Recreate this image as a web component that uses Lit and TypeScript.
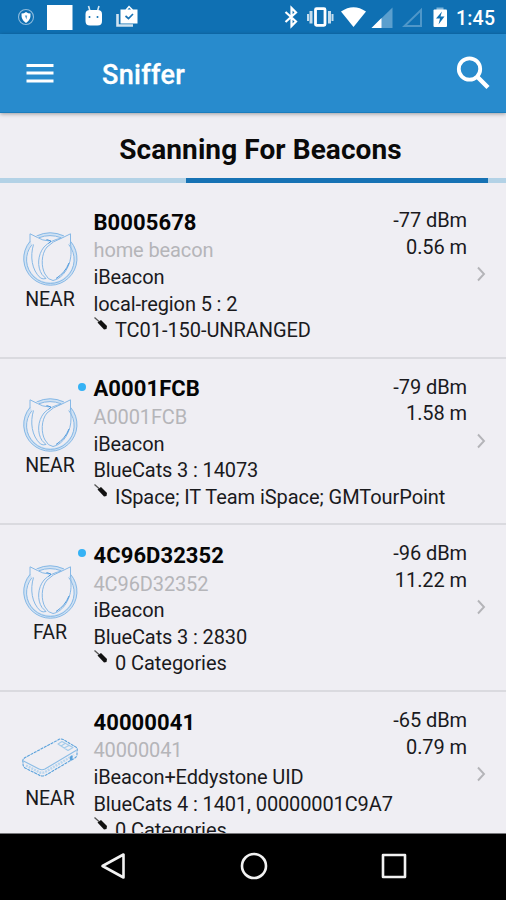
import { LitElement, html, svg, css, nothing } from "lit";
import { customElement, property } from "lit/decorators.js";

interface Beacon {
  name: string;
  alias: string;
  type: string;
  region: string;
  tags: string;
  rssi: string;
  distance: string;
  range: string;
  fresh: boolean;
  device: "tag" | "phone";
}

const beacons: Beacon[] = [
  { name: "B0005678", alias: "home beacon", type: "iBeacon", region: "local-region 5 : 2", tags: "TC01-150-UNRANGED", rssi: "-77 dBm", distance: "0.56 m", range: "NEAR", fresh: false, device: "tag" },
  { name: "A0001FCB", alias: "A0001FCB", type: "iBeacon", region: "BlueCats 3 : 14073", tags: "ISpace; IT Team iSpace; GMTourPoint", rssi: "-79 dBm", distance: "1.58 m", range: "NEAR", fresh: true, device: "tag" },
  { name: "4C96D32352", alias: "4C96D32352", type: "iBeacon", region: "BlueCats 3 : 2830", tags: "0 Categories", rssi: "-96 dBm", distance: "11.22 m", range: "FAR", fresh: true, device: "tag" },
  { name: "40000041", alias: "40000041", type: "iBeacon+Eddystone UID", region: "BlueCats 4 : 1401, 00000001C9A7", tags: "0 Categories", rssi: "-65 dBm", distance: "0.79 m", range: "NEAR", fresh: false, device: "phone" },
];

const catTag = svg`
  <g fill="none" stroke-linejoin="round">
    <g stroke="#cfe1f3" stroke-width="3">
      <path d="M8.500 10.500A25.300 25.300 0 1 0 48 10.500" />
      <path d="M16 4.500Q28-.5 41 4.500" />
    </g>
    <g stroke="#86b8e6" stroke-width="1">
      <path d="M8 9.500A26.600 26.600 0 1 0 48.700 9.500" />
      <path d="M10 12.500A23.800 23.800 0 1 0 46.700 12.500" />
      <path d="M14.500 4Q28-2.500 42 4M17 5.700Q28 1.500 39 5.700" />
      <path d="M8 10.500V1.800L15.500 5.500Q20 8.500 27.500 9" />
      <path d="M48.500 11V1.800L41 5.500Q30 9.500 25 15C19 22 19 35 23 42Q26 48 31 48.500C41 47 49.500 33 49 20Q49 14 48.500 11" />
      <path d="M39.500 6Q28 8.500 22 15C15.500 23 15 35 20 42.500L24 46.500Q21 47.500 18.500 46C9.500 38 8 24 11.500 12.500" />
      <path stroke="#4f9add" d="M24.500 7.500L29 9L26.500 11.500M34 46.500Q43 41 47 31" />
    </g>
  </g>`;

const phoneTag = svg`
  <g fill="none" stroke="#5aa2dc" stroke-width="1.1" stroke-linejoin="round">
    <path stroke-dasharray="3 .8" d="M1 31Q0 28 4 26L36 9Q39 7 42 9L53 15.500Q56 17 55 20V23Q55 26 52 27.500L24 44Q20 46 17 44L3 37Q1 35.500 1 33Z" />
    <path stroke="#8abce6" d="M1.500 30L17 38Q20 39.500 23 38L54 19.500" />
    <path stroke="#b9d6ef" stroke-width="2.500" stroke-dasharray="2 1" d="M4 34.500L18 41.500Q21 42.500 24 40.500L52 24" />
    <path stroke="#a3cbeb" d="M36 13L40 10.500L51 16.500L46 19.500ZM39 15L43 12.500M42 17L47 14.500" />
    <path fill="#5aa2dc" d="M48.500 26L50 25V28L48.500 29Z" />
  </g>`;

@customElement("beacon-row")
export class BeaconRow extends LitElement {
  @property({ attribute: false }) beacon!: Beacon;

  static styles = css`
    :host {
      display: grid;
      grid-template-columns: 93.5px minmax(0, 1fr) 80px 39px;
      flex: none;
      box-sizing: border-box;
      height: 166.67px;
      border-bottom: 2px solid #dadadf;
      color: #1a1a1d;
      font-size: 20px;
      line-height: 26.6px;
    }
    .range { width: 100px; padding-top: 39.5px; text-align: center; font-size: 19.5px; }
    .device { display: block; width: 56px; height: 56px; margin: 0 auto -1px; overflow: visible; }
    .details { position: relative; padding-top: 15.6px; white-space: nowrap; letter-spacing: -0.12px; }
    .fresh { position: absolute; left: -15.500px; top: 24px; width: 8px; height: 8px; border-radius: 50%; background: #35b2f5; }
    .name { font-weight: 700; font-size: 22px; line-height: 29.8px; color: #050505; letter-spacing: 0.08px; }
    .alias { color: #b5b5b9; }
    .tags { display: flex; letter-spacing: -0.06px; }
    .plug { flex: none; width: 14px; height: 14px; margin-right: 7.500px; }
    .signal { padding-top: 15px; text-align: right; white-space: nowrap; letter-spacing: -0.08px; }
    .open { width: 12px; height: 18px; margin: 73px 0 0 8px; }
  `;

  render() {
    const b = this.beacon;
    return html`
      <div class="range">
        <svg class="device" viewBox="0 0 56 56">${b.device === "tag" ? catTag : phoneTag}</svg>
        ${b.range}
      </div>
      <div class="details">
        ${b.fresh ? html`<span class="fresh"></span>` : nothing}
        <div class="name">${b.name}</div>
        <div class="alias">${b.alias}</div>
        <div>${b.type}</div>
        <div>${b.region}</div>
        <div class="tags">
          <svg class="plug" viewBox="0 0 14 14"><path d="M.5.5L5 4.500" stroke="#555" stroke-width="1.300" /><path d="M3.500 5.500L7 3L13 9L12.500 12L10 12.500Z" fill="#111" /></svg>
          <span>${b.tags}</span>
        </div>
      </div>
      <div class="signal"><div>${b.rssi}</div><div>${b.distance}</div></div>
      <svg class="open" viewBox="0 0 12 18"><path d="M3 2.500L9 9L3 15.500" fill="none" stroke="#b4b4b8" stroke-width="1.900" /></svg>
    `;
  }
}

@customElement("app-root")
export class AppRoot extends LitElement {
  static styles = css`
    :host {
      display: flex;
      flex-direction: column;
      height: 900px;
      overflow: hidden;
      background: #efeef3;
      font-family: Roboto, "Liberation Sans", sans-serif;
    }
    .status { display: flex; justify-content: space-between; flex: none; height: 34px; background: #0f70b3; }
    .status svg { display: block; height: 34px; }
    .right { display: flex; }
    .clock { width: 51px; padding-left: 1px; box-sizing: border-box; color: #fff; font-size: 19.5px; font-weight: 500; line-height: 37px; letter-spacing: 0.2px; }
    .bar {
      display: flex; align-items: center; flex: none; box-sizing: border-box; height: 79px; z-index: 1;
      padding: 0 16px 0 26px; background: #288bcd; border-bottom: 1px solid #1b7dbd; color: #fff;
      box-shadow: 0 1px 4px rgba(0, 0, 0, 0.35);
    }
    .menu { width: 28px; height: 24px; }
    .title { flex: 1; margin: 4px 0 0 48px; font-size: 27px; font-weight: 500; letter-spacing: 0.3px; -webkit-text-stroke: 0.3px #fff; }
    .search { width: 34px; height: 34px; }
    .heading { flex: none; height: 65px; padding-left: 15px; line-height: 74px; text-align: center; font-size: 28px; font-weight: 700; letter-spacing: 0.08px; color: #0a0a0a; }
    .track { display: flex; flex: none; height: 5px; background: #b3d2e6; }
    .run { width: 302px; margin-left: 186px; background: #1672b4; }
    .list { display: flex; flex-direction: column; flex: 1; min-height: 0; padding-top: 9px; overflow: hidden; }
    .nav { display: flex; align-items: center; justify-content: space-between; flex: none; box-sizing: border-box; height: 67px; padding: 0 98px 2px 99px; background: #000; border-top: 1px solid #77777a; }
    .nav svg { width: 28px; height: 28px; fill: none; stroke: #f2f2f2; stroke-width: 2.600; stroke-linejoin: round; }
  `;

  render() {
    return html`
      <div class="status">
        <svg width="150" viewBox="0 0 150 34">
          <circle cx="26" cy="17" r="7.500" fill="none" stroke="#8dbbdd" stroke-width="1.100" />
          <path d="M21.500 13.500Q24 13.500 26 12Q28 13.500 30.500 13.500Q31 20 26 23Q21 20 21.500 13.500Z" fill="#fff" />
          <path d="M24.800 15.500H27.200L26.500 19.500Z" fill="#5b9fce" />
          <rect x="47" y="5" width="25.500" height="25" fill="#fff" />
          <path d="M88.500 6L90 11M99 6L97.500 11" stroke="#d6e7f3" stroke-width="1.600" />
          <path d="M85.500 14Q85.500 10 90 10H97.500Q102 10 102 14V21Q102 25.500 97.500 25.500H90Q85.500 25.500 85.500 21Z" fill="#fff" />
          <circle cx="89.500" cy="17" r="1" fill="#0f70b3" /><circle cx="97.500" cy="17" r="1" fill="#0f70b3" />
          <path d="M117.500 14V25.500H133" fill="none" stroke="#d0e3f1" stroke-width="2.600" />
          <path d="M120.500 9.500H125.500L129 5.500L133 9.500H137.500V23.500H120.500Z" fill="#fff" />
          <path d="M127.500 9.500L129.200 7.800L131 9.500Z" fill="#0f70b3" />
          <path d="M125.500 16L128.500 18.500L133 14" fill="none" stroke="#1b74b5" stroke-width="1.700" />
        </svg>
        <div class="right">
          <svg width="175" viewBox="280 0 175 34">
            <path d="M285.500 12L296 21.500L291.500 26V8L296 12.500L285.500 22" fill="none" stroke="#fff" stroke-width="2.200" />
            <rect x="315.500" y="8.700" width="9.500" height="16.600" rx="1" fill="none" stroke="#fff" stroke-width="2.800" />
            <path d="M311 11V23.500M329.500 11V23.500" stroke="#c5ddee" stroke-width="3" />
            <path d="M308 14V21M332.500 14V21" stroke="#c5ddee" stroke-width="2" />
            <path d="M341 11.500Q353.500 3 366 11.500L353.500 27Z" fill="#fff" />
            <path d="M392.500 7.500V28H371.500Z" fill="#5b9fce" /><path d="M381.500 18V28H371.500Z" fill="#fff" />
            <path d="M421 10V26H404.500Z" fill="none" stroke="#4f97c9" stroke-width="2" />
            <rect x="436.500" y="7.500" width="7" height="3" fill="#7db3d9" />
            <rect x="433.500" y="9.500" width="13.500" height="17.500" rx="1" fill="#fff" />
            <path d="M442 11.500L436 18.500H440L438.500 24.500L444.500 16.500H440.500Z" fill="#0f70b3" />
          </svg>
          <div class="clock">1:45</div>
        </div>
      </div>
      <div class="bar">
        <svg class="menu" viewBox="0 0 28 24"><path d="M.5 4.500H27.500M.5 12H27.500M.5 20H27.500" stroke="#fff" stroke-width="3.200" /></svg>
        <div class="title">Sniffer</div>
        <svg class="search" viewBox="0 0 34 34"><circle cx="13.500" cy="13" r="10.700" fill="none" stroke="#fff" stroke-width="3.800" /><path d="M21 20.500L32 31.500" stroke="#fff" stroke-width="4.400" /></svg>
      </div>
      <div class="heading">Scanning For Beacons</div>
      <div class="track"><div class="run"></div></div>
      <div class="list">${beacons.map((b) => html`<beacon-row .beacon=${b}></beacon-row>`)}</div>
      <div class="nav">
        <svg viewBox="0 0 28 28"><path d="M3.500 14L24.500 2.500V25.500Z" /></svg>
        <svg viewBox="0 0 28 28"><circle cx="14" cy="14" r="12" /></svg>
        <svg viewBox="0 0 28 28"><rect x="3" y="3" width="22" height="22" /></svg>
      </div>
    `;
  }
}
